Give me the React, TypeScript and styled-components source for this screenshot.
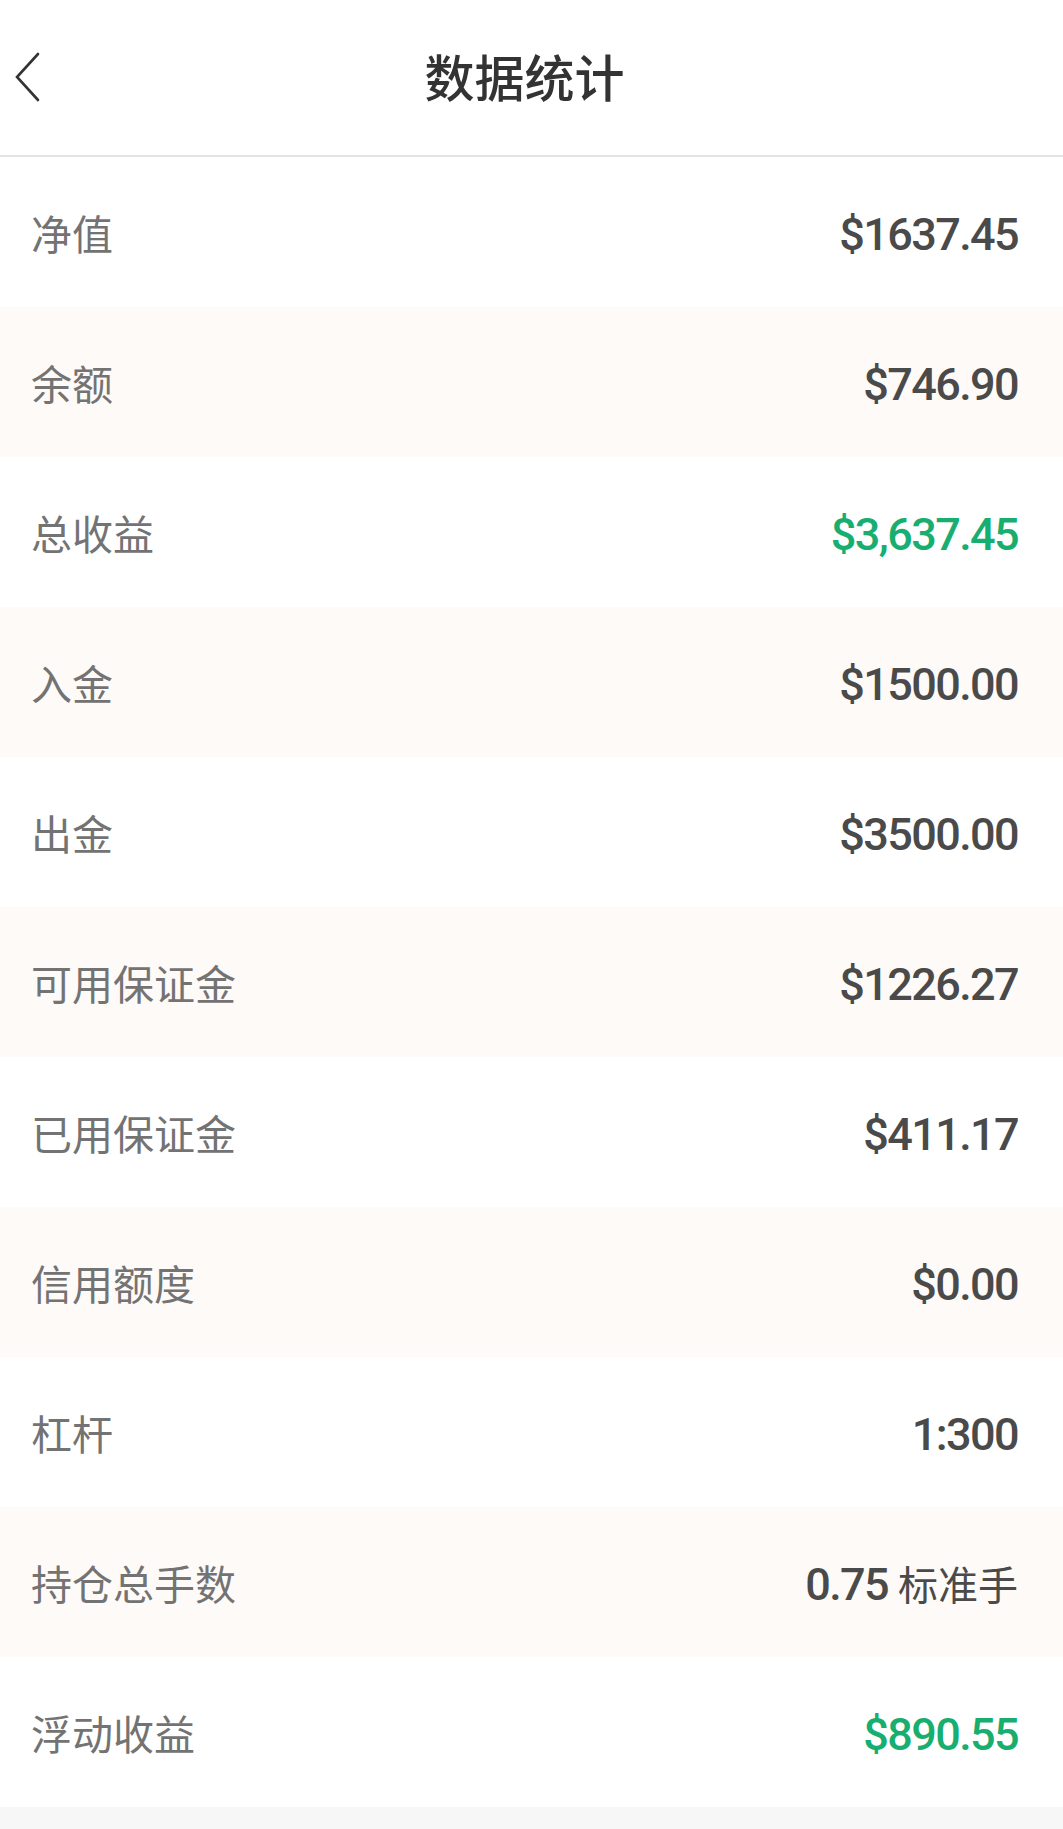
import React from "react";
import styled, { createGlobalStyle } from "styled-components";

const GlobalStyle = createGlobalStyle`
  html, body {
    margin: 0;
    padding: 0;
    background: #f7f7f7;
  }
  body {
    font-family: "Noto Sans CJK SC", "Noto Sans", sans-serif;
  }
`;

const Page = styled.div`
  width: 1063px;
  min-height: 1829px;
  background: #f7f7f7;
  display: flex;
  flex-direction: column;
`;

const Header = styled.header`
  height: 155px;
  background: #ffffff;
  border-bottom: 2px solid #e4e4e4;
  display: flex;
  align-items: center;
  justify-content: center;
  position: relative;
  padding-right: 14px;
`;

const BackButton = styled.button`
  position: absolute;
  left: 7px;
  top: 47px;
  width: 40px;
  height: 60px;
  padding: 0;
  border: none;
  background: transparent;
  display: flex;
  align-items: center;
  justify-content: center;
`;

const Title = styled.h1`
  margin: 0;
  font-family: "Noto Sans CJK SC", sans-serif;
  font-size: 50px;
  font-weight: 500;
  color: #333333;
  line-height: 1;
  padding-bottom: 6px;
`;

const List = styled.div`
  display: flex;
  flex-direction: column;
`;

const Row = styled.div<{ $alt: boolean }>`
  height: 150px;
  box-sizing: border-box;
  padding: 0 45px 0 31px;
  display: flex;
  align-items: center;
  justify-content: space-between;
  background: ${(p) => (p.$alt ? "#fefaf8" : "#ffffff")};
`;

const Label = styled.span`
  font-family: "Noto Sans CJK SC", sans-serif;
  font-size: 41px;
  color: #737373;
  line-height: 1;
  padding-top: 1px;
`;

const Value = styled.span<{ $green?: boolean }>`
  font-family: Roboto, "Noto Sans CJK SC", sans-serif;
  font-size: 45px;
  font-weight: 500;
  letter-spacing: -1.6px;
  color: ${(p) => (p.$green ? "#17ae70" : "#4a4a4a")};
  line-height: 1;
  padding-top: 4px;
`;

const Unit = styled.span`
  font-family: "Noto Sans CJK SC", sans-serif;
  font-size: 40px;
  font-weight: 400;
  letter-spacing: 0;
  margin-left: 10px;
`;

type Item = { label: string; value: string; unit?: string; green?: boolean };

const items: Item[] = [
  { label: "净值", value: "$1637.45" },
  { label: "余额", value: "$746.90" },
  { label: "总收益", value: "$3,637.45", green: true },
  { label: "入金", value: "$1500.00" },
  { label: "出金", value: "$3500.00" },
  { label: "可用保证金", value: "$1226.27" },
  { label: "已用保证金", value: "$411.17" },
  { label: "信用额度", value: "$0.00" },
  { label: "杠杆", value: "1:300" },
  { label: "持仓总手数", value: "0.75", unit: "标准手" },
  { label: "浮动收益", value: "$890.55", green: true },
];

export default function App() {
  return (
    <>
      <GlobalStyle />
      <Page>
        <Header>
          <BackButton aria-label="返回">
            <svg width="30" height="52" viewBox="0 0 30 52" fill="none">
              <path
                d="M26 3 L5 26 L26 49"
                stroke="#333333"
                strokeWidth="2.6"
                strokeLinecap="round"
                strokeLinejoin="miter"
              />
            </svg>
          </BackButton>
          <Title>数据统计</Title>
        </Header>
        <List>
          {items.map((it, i) => (
            <Row key={it.label} $alt={i % 2 === 1}>
              <Label>{it.label}</Label>
              <Value $green={it.green}>
                {it.value}
                {it.unit && <Unit>{it.unit}</Unit>}
              </Value>
            </Row>
          ))}
        </List>
      </Page>
    </>
  );
}
